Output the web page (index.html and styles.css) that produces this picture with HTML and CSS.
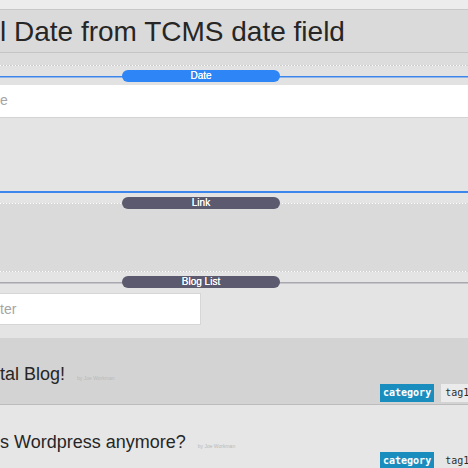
FILE: index.html
```html
<!DOCTYPE html>
<html>
<head>
<meta charset="utf-8">
<link rel="stylesheet" href="styles.css">
</head>
<body>
<div class="page">
  <div class="topbar"></div>
  <div class="titlebar"><h1 class="title">l Date from TCMS date field</h1></div>
  <div class="gap-top"></div>
  <div class="dots"></div>
  <div class="label-row label-date"><span class="pill pill-blue">Date</span></div>
  <div class="date-input"><span class="ph">e</span></div>
  <div class="date-body"></div>
  <div class="label-row label-link"><span class="pill pill-dark">Link</span></div>
  <div class="link-body"></div>
  <div class="dots dots-blog"></div>
  <div class="label-row label-blog"><span class="pill pill-dark">Blog List</span></div>
  <div class="filter-wrap"><div class="filter"><span class="ph">ter</span></div></div>
  <div class="item item-a">
    <div class="item-title"><span class="t">tal Blog!</span><span class="by">by Joe Workman</span></div>
    <div class="tags"><span class="cat">category</span><span class="tag">tag1</span></div>
  </div>
  <div class="item item-b">
    <div class="item-title"><span class="t">s Wordpress anymore?</span><span class="by">by Joe Workman</span></div>
    <div class="tags"><span class="cat">category</span><span class="tag">tag1</span></div>
  </div>
</div>
</body>
</html>
```
FILE: styles.css
```css
* { box-sizing: border-box; }
html, body { margin: 0; padding: 0; }
body {
  width: 468px;
  height: 468px;
  overflow: hidden;
  background: #e6e6e6;
  font-family: "Liberation Sans", Arial, Helvetica, sans-serif;
}
.page { width: 468px; }
.topbar {
  height: 10px;
  background: #ececec;
  border-bottom: 1px solid #c8c8c8;
}
.titlebar {
  height: 43px;
  padding-top: 1px;
  background: #dadada;
  border-bottom: 1px solid #c4c4c4;
}
.title {
  margin: 0;
  font-size: 28px;
  line-height: 41px;
  font-weight: normal;
  color: #262626;
  white-space: nowrap;
}
.gap-top { height: 12px; background: #dcdcdc; }
.dots {
  height: 1px;
  background: repeating-linear-gradient(90deg, #ffffff 0 1px, #cfcfcf 1px 3px);
}
.label-row {
  display: flex;
  padding-left: 122px;
}
.pill {
  width: 158px;
  height: 12px;
  border-radius: 6px;
  color: #fff;
  font-size: 10px;
  line-height: 12px;
  text-align: center;
  text-shadow: 0 0 0.4px #fff;
}
.pill-blue { background: #2d85f6; }
.pill-dark { background: #5b5a6e; }
.label-date {
  height: 19px;
  padding-top: 4px;
  background: linear-gradient(#3d86ee, #3d86ee) 0 10px / 100% 1.5px no-repeat, #e2e2e2;
}
.date-input {
  height: 33px;
  background: #fff;
  border-bottom: 1px solid #d3d3d3;
  font-size: 14px;
  line-height: 31px;
}
.ph { color: #a5a5a5; display: block; }
.date-body {
  height: 75px;
  background: #e4e4e4;
  border-bottom: 2px solid #3d86ee;
}
.label-link {
  height: 16px;
  padding-top: 4px;
  background:
    repeating-linear-gradient(90deg, #ffffff 0 1px, transparent 1px 3px) 0 10px / 100% 1px no-repeat,
    linear-gradient(#e4e4e4 0 10px, #dadada 10px);
}
.link-body { height: 62px; background: #dadada; }
.dots-blog { background: repeating-linear-gradient(90deg, #ffffff 0 1px, #d6d6d6 1px 3px); }
.label-blog {
  height: 18px;
  padding-top: 4px;
  background: linear-gradient(#a9a8b1, #a9a8b1) 0 10px / 100% 1.5px no-repeat, #e4e4e4;
}
.filter-wrap {
  height: 48px;
  padding-top: 3px;
  background: #e4e4e4;
}
.filter {
  width: 201px;
  height: 32px;
  background: #fff;
  border: 1px solid #d6d6d6;
  border-left: none;
  font-size: 14px;
  line-height: 30px;
}
.item {
  height: 67px;
  padding-top: 26px;
  border-bottom: 1px solid #bcbcbc;
}
.item-a { background: #d3d3d3; }
.item-b { background: #e6e6e6; border-bottom: none; padding-top: 27px; }
.item-title {
  height: 20px;
  font-size: 18px;
  line-height: 20px;
  color: #262626;
  white-space: nowrap;
}
.by {
  margin-left: 12px;
  font-size: 5px;
  color: #b9b9b9;
}
.tags {
  display: flex;
  height: 18px;
  padding-left: 380px;
  white-space: nowrap;
}
.cat {
  height: 18px;
  padding: 0 3px;
  background: #1a8dbf;
  color: #fff;
  font-family: "DejaVu Sans Mono", monospace;
  font-weight: bold;
  font-size: 10px;
  line-height: 18px;
}
.tag {
  height: 18px;
  margin-left: 7px;
  padding: 0 4px;
  background: #ebebeb;
  color: #2e2e2e;
  font-family: "DejaVu Sans Mono", monospace;
  font-size: 10px;
  line-height: 18px;
}
.item-b .tag { background: #e6e6e6; }
```
